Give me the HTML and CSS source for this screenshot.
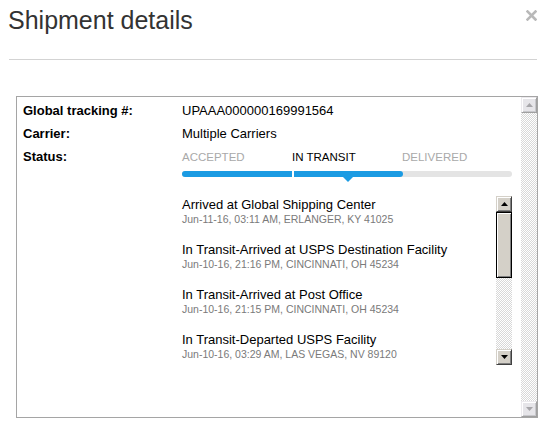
FILE: index.html
```html
<!DOCTYPE html>
<html>
<head>
<meta charset="utf-8">
<link rel="stylesheet" href="styles.css">
</head>
<body>
<div class="dialog">
  <div class="header">
    <h1 class="title">Shipment details</h1>
    <svg class="close" width="11" height="11" viewBox="0 0 11 11"><path d="M1.5 1.5 L9.5 9.5 M9.5 1.5 L1.5 9.5" stroke="#b9b9b9" stroke-width="2.6" stroke-linecap="square"/></svg>
  </div>
  <div class="rule"></div>
  <div class="box">
    <div class="content">
      <div class="row"><div class="label">Global tracking #:</div><div class="value">UPAAA000000169991564</div></div>
      <div class="row"><div class="label">Carrier:</div><div class="value">Multiple Carriers</div></div>
      <div class="row"><div class="label">Status:</div>
        <div class="value status">
          <div class="steps">
            <span class="step">ACCEPTED</span>
            <span class="step current">IN TRANSIT</span>
            <span class="step">DELIVERED</span>
          </div>
          <div class="bar">
            <div class="fill"></div>
            <div class="sep"></div>
            <div class="pointer"></div>
          </div>
          <div class="events">
            <div class="list">
              <div class="event"><div class="ev-title">Arrived at Global Shipping Center</div><div class="ev-sub">Jun-11-16, 03:11 AM, ERLANGER, KY 41025</div></div>
              <div class="event"><div class="ev-title">In Transit-Arrived at USPS Destination Facility</div><div class="ev-sub">Jun-10-16, 21:16 PM, CINCINNATI, OH 45234</div></div>
              <div class="event"><div class="ev-title">In Transit-Arrived at Post Office</div><div class="ev-sub">Jun-10-16, 21:15 PM, CINCINNATI, OH 45234</div></div>
              <div class="event"><div class="ev-title">In Transit-Departed USPS Facility</div><div class="ev-sub">Jun-10-16, 03:29 AM, LAS VEGAS, NV 89120</div></div>
            </div>
            <div class="sb inner">
              <div class="btn"><svg width="7" height="4" viewBox="0 0 7 4"><polygon points="3.5,0 7,4 0,4" fill="#000"/></svg></div>
              <div class="thumb"></div>
              <div class="track"></div>
              <div class="btn"><svg width="7" height="4" viewBox="0 0 7 4"><polygon points="0,0 7,0 3.5,4" fill="#000"/></svg></div>
            </div>
          </div>
        </div>
      </div>
    </div>
    <div class="sb outer">
      <div class="btn"><svg width="7" height="4" viewBox="0 0 7 4"><polygon points="3.5,0 7,4 0,4" fill="#a7a6aa"/></svg></div>
      <div class="track"></div>
      <div class="btn"><svg width="7" height="4" viewBox="0 0 7 4"><polygon points="0,0 7,0 3.5,4" fill="#a7a6aa"/></svg></div>
    </div>
  </div>
</div>
</body>
</html>
```

FILE: styles.css
```css
* { box-sizing: border-box; }
html, body { margin: 0; padding: 0; background: #fff; }
body { font-family: "Liberation Sans", Arial, sans-serif; color: #000; }

.dialog { width: 546px; height: 421px; }

.header {
  display: flex;
  justify-content: space-between;
  align-items: flex-start;
  padding: 5px 9px 0 8px;
}
.title {
  margin: 0;
  font-size: 25px;
  font-weight: normal;
  line-height: 30px;
  color: #333;
}
.close { margin-top: 5px; }

.rule {
  height: 1px;
  background: #d3d3d3;
  margin: 24px 9px 0 9px;
}

.box {
  margin: 36px 8px 0 16px;
  height: 322px;
  border: 1px solid #a5a5a5;
  display: flex;
}
.content {
  flex: 1;
  padding-left: 6px;
  padding-top: 2px;
}
.row {
  display: flex;
  line-height: 23px;
  font-size: 13px;
}
.label {
  width: 159px;
  font-weight: bold;
}
.value { width: 330px; }

.steps {
  display: flex;
  font-size: 11.5px;
  line-height: 23px;
  color: #a9a9a9;
  padding-top: 1px;
}
.step { width: 110px; }
.step.current { color: #000; }

.bar {
  position: relative;
  margin-top: 2px;
  height: 6px;
  border-radius: 3px;
  background: #e4e4e4;
}
.fill {
  width: 221px;
  height: 6px;
  border-radius: 3px;
  background: #1b9be3;
}
.sep {
  position: absolute;
  left: 110px;
  top: 0;
  width: 2px;
  height: 6px;
  background: #fff;
}
.pointer {
  position: absolute;
  left: 161px;
  top: 6px;
  width: 0;
  height: 0;
  border-left: 5px solid transparent;
  border-right: 5px solid transparent;
  border-top: 5px solid #1b9be3;
}

.events {
  display: flex;
  margin-top: 19px;
  height: 169px;
}
.list { flex: 1; padding-top: 1px; }
.event { margin-bottom: 16px; }
.ev-title { font-size: 13px; line-height: 16px; color: #000; }
.ev-sub { font-size: 10.5px; line-height: 13px; color: #7a7a7a; }

.sb {
  width: 16px;
  display: flex;
  flex-direction: column;
}
.track {
  flex: 1;
  background-image: repeating-conic-gradient(#d8d8d8 0 25%, #fff 0 50%);
  background-size: 2px 2px;
}
.btn {
  height: 16px;
  display: flex;
  align-items: center;
  justify-content: center;
  border: 1px solid;
}
.inner .btn, .thumb {
  background: #d4d0c8;
  border-color: #d4d0c8 #404040 #404040 #d4d0c8;
  box-shadow: inset 1px 1px #fff, inset -1px -1px #808080;
}
.thumb { height: 66px; border: 1px solid; }
.outer .btn {
  background: #e6e5e9;
  border-color: #eceaee #a0a0a0 #a0a0a0 #eceaee;
  box-shadow: inset 1px 1px #fff, inset -1px -1px #c8c8cc;
}
```
